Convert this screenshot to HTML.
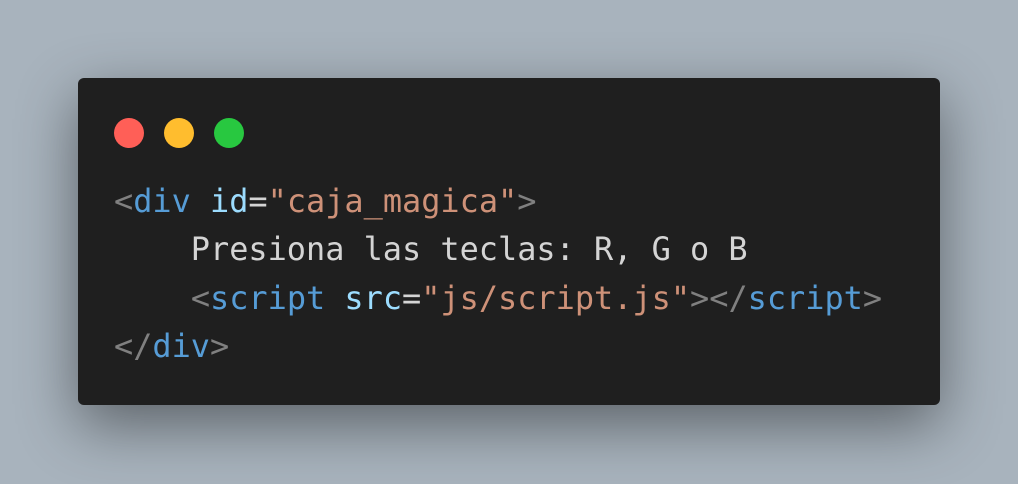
<!DOCTYPE html>
<html><head><style>
html,body{margin:0;padding:0;}
body{width:1018px;height:484px;background:#a8b3bd;position:relative;overflow:hidden;}
.win{position:absolute;left:78px;top:78px;width:862px;height:327px;background:#1f1f1f;border-radius:6px;box-shadow:0 20px 60px rgba(0,0,0,0.45);}
.dot{position:absolute;top:40px;width:30px;height:30px;border-radius:50%;}
pre{position:absolute;left:36px;top:99px;margin:0;font-family:"DejaVu Sans Mono","Liberation Mono",monospace;font-size:31.9px;line-height:48.3px;color:#d4d4d4;}
.b{color:#808080}.t{color:#569cd6}.a{color:#9cdcfe}.s{color:#ce9178}
</style></head><body>
<div class="win">
<div class="dot" style="left:36px;background:#ff5f57"></div>
<div class="dot" style="left:86px;background:#ffbd2e"></div>
<div class="dot" style="left:136px;background:#28c840"></div>
<pre><span class="b">&lt;</span><span class="t">div</span> <span class="a">id</span>=<span class="s">"caja_magica"</span><span class="b">&gt;</span>
    Presiona las teclas: R, G o B
    <span class="b">&lt;</span><span class="t">script</span> <span class="a">src</span>=<span class="s">"js/script.js"</span><span class="b">&gt;&lt;/</span><span class="t">script</span><span class="b">&gt;</span>
<span class="b">&lt;/</span><span class="t">div</span><span class="b">&gt;</span></pre>
</div>
</body></html>
